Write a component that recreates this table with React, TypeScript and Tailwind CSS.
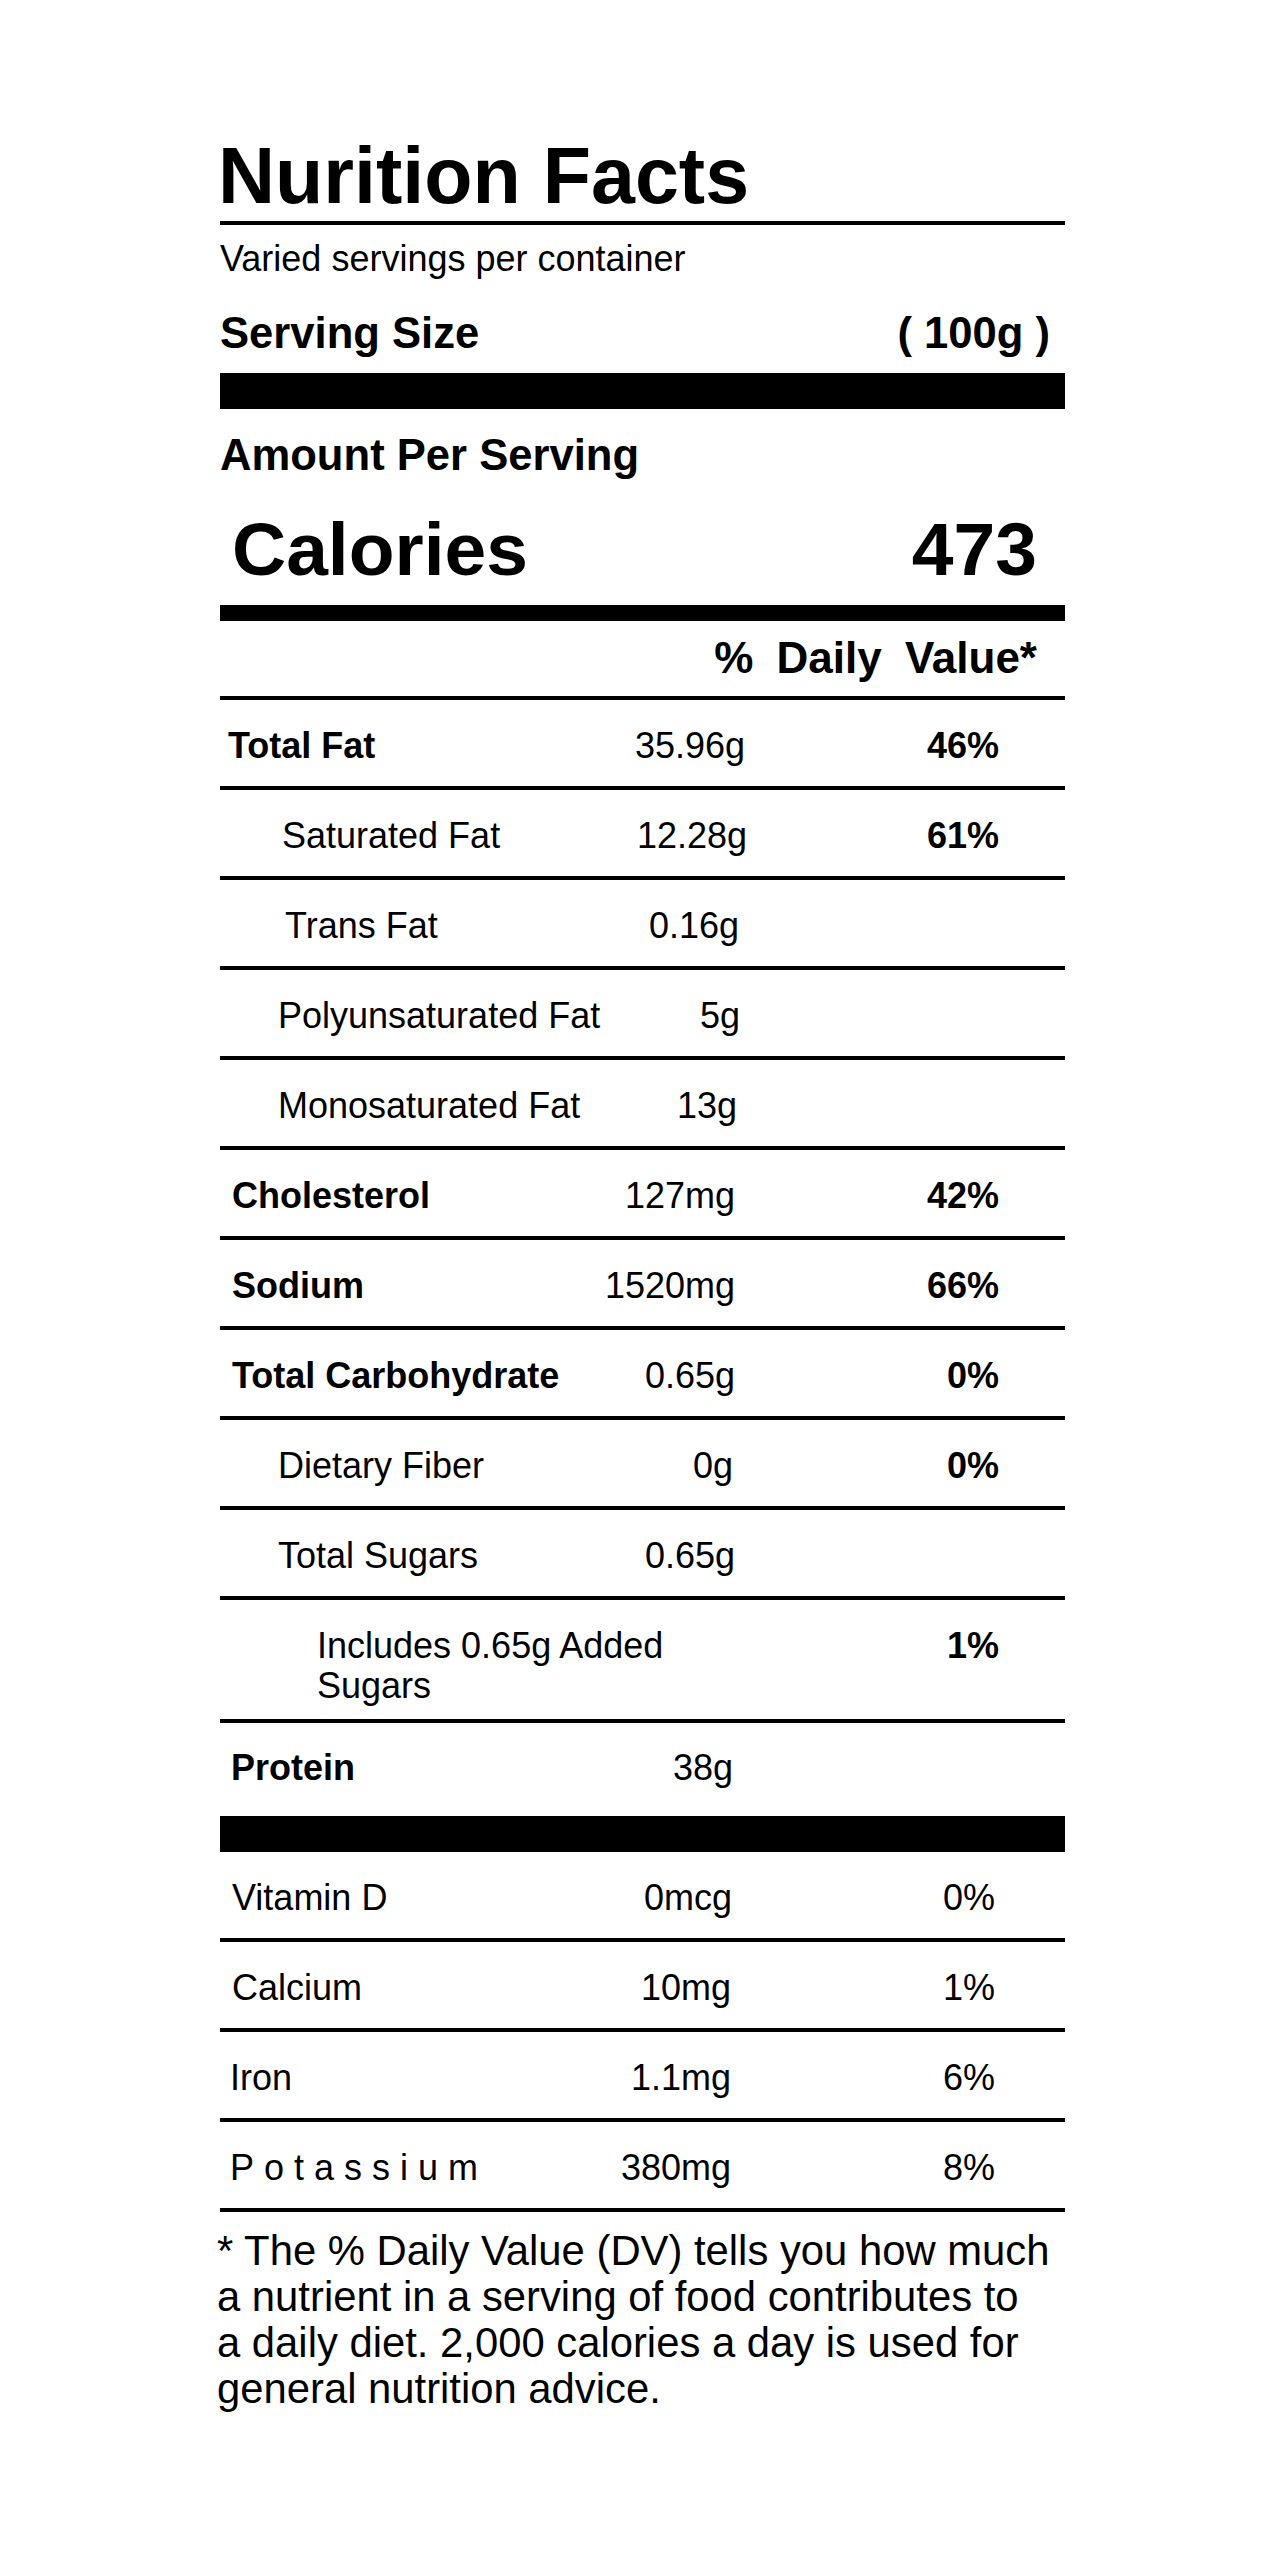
import type { ReactNode } from 'react';

interface RowProps {
  label: ReactNode;
  amount?: string;
  pct?: string;
  labelClass: string;
  col: string;
  boldPct?: boolean;
  pad?: string;
  last?: boolean;
}

function Row({ label, amount, pct, labelClass, col, boldPct, pad, last }: RowProps) {
  return (
    <div
      className={`flex items-start text-[36px] leading-[40px] ${pad ?? 'pt-[26px] pb-[20px]'} ${
        last ? '' : 'border-b-4 border-black'
      }`}
    >
      <div className={`flex shrink-0 justify-between ${col}`}>
        <span className={`min-w-0 ${labelClass}`}>{label}</span>
        {amount && <span className="shrink-0">{amount}</span>}
      </div>
      {pct && (
        <span className={`ml-auto ${boldPct ? 'font-bold pr-[66px]' : 'pr-[70px]'}`}>{pct}</span>
      )}
    </div>
  );
}

export default function App() {
  return (
    <div
      className="min-h-screen bg-white pt-[137px] pl-[220px] text-black"
      style={{ fontFamily: '"Liberation Sans", Arial, Helvetica, sans-serif' }}
    >
      <div className="w-[845px]">
        {/* Header */}
        <div className="border-b-4 border-black pb-[6px]">
          <h1 className="-ml-[2px] -mt-[1px] text-[79px] font-bold leading-[79px]">Nurition Facts</h1>
        </div>
        <p className="pt-[14px] text-[36px] leading-[40px]">Varied servings per container</p>
        <div className="mt-[30px] flex justify-between pr-[15px] text-[43.6px] font-bold leading-[48px]">
          <span>Serving Size</span>
          <span>( 100g )</span>
        </div>
        <div className="mt-[16px] h-[36px] bg-black" />

        <p className="mt-[22px] text-[43.6px] font-bold leading-[48px]">Amount Per Serving</p>
        <div className="mt-[30px] flex justify-between pl-[12px] pr-[28px] text-[75px] font-bold leading-[80px]">
          <span>Calories</span>
          <span>473</span>
        </div>
        <div className="mt-[16px] h-[16px] bg-black" />

        <div className="border-b-4 border-black pt-[13px] pb-[14px] pr-[28px] text-right text-[44px] font-bold leading-[48px] [word-spacing:11px]">
          % Daily Value*
        </div>

        {/* Nutrients */}
        <Row label="Total Fat" amount="35.96g" pct="46%" boldPct labelClass="pl-[8px] font-bold" col="w-[525px]" />
        <Row label="Saturated Fat" amount="12.28g" pct="61%" boldPct labelClass="pl-[62px]" col="w-[527px]" />
        <Row label="Trans Fat" amount="0.16g" labelClass="pl-[65px]" col="w-[519px]" />
        <Row label="Polyunsaturated Fat" amount="5g" labelClass="pl-[58px]" col="w-[520px]" />
        <Row label="Monosaturated Fat" amount="13g" labelClass="pl-[58px]" col="w-[517px]" />
        <Row label="Cholesterol" amount="127mg" pct="42%" boldPct labelClass="pl-[12px] font-bold" col="w-[515px]" />
        <Row label="Sodium" amount="1520mg" pct="66%" boldPct labelClass="pl-[12px] font-bold" col="w-[515px]" />
        <Row
          label="Total Carbohydrate"
          amount="0.65g"
          pct="0%"
          boldPct
          labelClass="pl-[12px] font-bold"
          col="w-[515px]"
        />
        <Row label="Dietary Fiber" amount="0g" pct="0%" boldPct labelClass="pl-[58px]" col="w-[513px]" />
        <Row label="Total Sugars" amount="0.65g" labelClass="pl-[58px]" col="w-[515px]" />
        <Row
          label="Includes 0.65g Added Sugars"
          pct="1%"
          boldPct
          labelClass="pl-[97px]"
          col="w-[515px]"
          pad="pt-[26px] pb-[13px]"
        />
        <Row
          label="Protein"
          amount="38g"
          labelClass="pl-[11px] font-bold"
          col="w-[513px]"
          pad="pt-[25px] pb-[28px]"
          last
        />
        <div className="h-[36px] bg-black" />

        {/* Vitamins & minerals */}
        <Row label="Vitamin D" amount="0mcg" pct="0%" labelClass="pl-[12px]" col="w-[512px]" />
        <Row label="Calcium" amount="10mg" pct="1%" labelClass="pl-[12px]" col="w-[511px]" />
        <Row label="Iron" amount="1.1mg" pct="6%" labelClass="pl-[10px]" col="w-[511px]" />
        <Row label="Potassium" amount="380mg" pct="8%" labelClass="pl-[10px] tracking-[10px]" col="w-[511px]" />

        {/* Footnote */}
        <p className="-ml-[3px] mt-[16px] text-[41.8px] leading-[46px]">
          * The % Daily Value (DV) tells you how much
          <br />
          a nutrient in a serving of food contributes to
          <br />
          a daily diet. 2,000 calories a day is used for
          <br />
          general nutrition advice.
        </p>
      </div>
    </div>
  );
}
